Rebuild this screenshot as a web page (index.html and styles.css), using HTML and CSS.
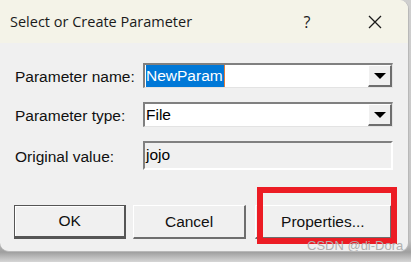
FILE: index.html
```html
<!DOCTYPE html>
<html lang="en">
<head>
    <meta charset="UTF-8">
    <title>Select or Create Parameter</title>
    <link rel="stylesheet" href="styles.css">
</head>
<body>
    <div class="janela">
        <!-- Barra de titulo -->
        <div class="titulo">
            <span class="titulo-texto">Select or Create Parameter</span>
            <span class="titulo-ajuda">?</span>
            <span class="titulo-fechar">
                <svg width="14" height="14" viewBox="0 0 14 14"><path d="M1 1 L13 13 M13 1 L1 13" stroke="#1a1a1a" stroke-width="1.3" fill="none"/></svg>
            </span>
        </div>

        <div class="conteudo">
            <div class="campos">
                <label class="rotulo">Parameter name:</label>
                <div class="combo">
                    <div class="combo-texto"><span class="selecionado">NewParam</span></div>
                    <div class="combo-botao"><span class="seta"></span></div>
                </div>

                <label class="rotulo">Parameter type:</label>
                <div class="combo">
                    <div class="combo-texto">File</div>
                    <div class="combo-botao"><span class="seta"></span></div>
                </div>

                <label class="rotulo">Original value:</label>
                <div class="campo-leitura">jojo</div>
            </div>

            <div class="botoes">
                <button class="btn btn-padrao">OK</button>
                <button class="btn">Cancel</button>
                <button class="btn">Properties...</button>
            </div>
        </div>

        <div class="destaque"></div>
        <div class="marca">CSDN @di-Dora</div>
    </div>
</body>
</html>
```

FILE: styles.css
```css
body {
    margin: 0;
    width: 411px;
    height: 262px;
    overflow: hidden;
    background: linear-gradient(#cfcfcf, #c4c4c4 240px, #9f9f9f 252px, #d6d6d6 262px);
    font-family: "Liberation Sans", Arial, sans-serif;
}

.janela {
    position: relative;
    width: 408px;
    height: 251px;
    background-color: #f0f0f0;
    border: 1px solid #b8b8b8;
    border-top: none;
    border-left: none;
    border-radius: 0 9px 9px 9px;
    overflow: hidden;
}

/* Barra de titulo */
.titulo {
    height: 43px;
    background-color: #f4f3e8;
    display: flex;
    align-items: center;
    padding-left: 10px;
    font-family: "Open Sans", "Noto Sans", sans-serif;
    font-size: 14.5px;
    color: #1a1a1a;
}

.titulo-texto {
    flex: 1;
}

.titulo-ajuda {
    width: 20px;
    margin-right: 51px;
    font-size: 16px;
    text-align: center;
}

.titulo-fechar {
    display: flex;
    margin-right: 26px;
}

.conteudo {
    padding: 20px 16px 0 15px;
}

.campos {
    display: grid;
    grid-template-columns: 128px 250px;
    row-gap: 14px;
    align-items: center;
}

.rotulo {
    font-size: 15.5px;
    color: #111;
    padding-top: 2px;
}

.combo {
    height: 25px;
    box-sizing: border-box;
    display: flex;
    background-color: #fff;
    border-top: 2px solid #808080;
    border-left: 2px solid #808080;
    border-right: 1px solid #e3e3e3;
    border-bottom: 1px solid #e3e3e3;
}

.combo-texto {
    flex: 1;
    display: flex;
    align-items: center;
    font-size: 15.5px;
    padding-left: 1px;
}

.selecionado {
    background-color: #0078d7;
    color: #fff;
    padding: 2px 1px 2px 0;
    border-right: 1px solid #e07b39;
}

.combo-botao {
    width: 24px;
    box-sizing: border-box;
    background-color: #f0f0f0;
    border-top: 1px solid #fff;
    border-left: 1px solid #fff;
    border-right: 2px solid #6e6e6e;
    border-bottom: 2px solid #6e6e6e;
    display: flex;
    align-items: center;
    justify-content: center;
}

.seta {
    width: 0;
    height: 0;
    border-left: 6px solid transparent;
    border-right: 6px solid transparent;
    border-top: 6px solid #000;
}

.campo-leitura {
    height: 29px;
    box-sizing: border-box;
    border-top: 2px solid #808080;
    border-left: 2px solid #808080;
    border-right: 2px solid #fff;
    border-bottom: 2px solid #fff;
    font-size: 15.5px;
    padding: 3px 0 0 1px;
}

.botoes {
    display: flex;
    gap: 7px;
    margin-top: 35px;
    margin-left: -1px;
}

.btn {
    width: 113px;
    height: 34px;
    background-color: #f0f0f0;
    font-family: "Liberation Sans", Arial, sans-serif;
    font-size: 15.5px;
    color: #111;
    border-top: 1px solid #fff;
    border-left: 1px solid #fff;
    border-right: 2px solid #6e6e6e;
    border-bottom: 2px solid #6e6e6e;
    padding: 0;
}

.btn-padrao {
    border: 1px solid #555;
    border-bottom: 3px solid #555;
    border-right: 2px solid #555;
    box-shadow: inset 1px 1px 0 #fff;
}

.btn:last-child {
    width: 138px;
    margin-left: 2px;
}

/* Moldura vermelha sobre o botao */
.destaque {
    position: absolute;
    left: 257px;
    top: 187px;
    width: 128px;
    height: 45px;
    border: 6px solid #ec1c24;
}

.marca {
    position: absolute;
    left: 307px;
    top: 239px;
    font-size: 13px;
    line-height: 13px;
    color: #b0b0b0;
}
```
